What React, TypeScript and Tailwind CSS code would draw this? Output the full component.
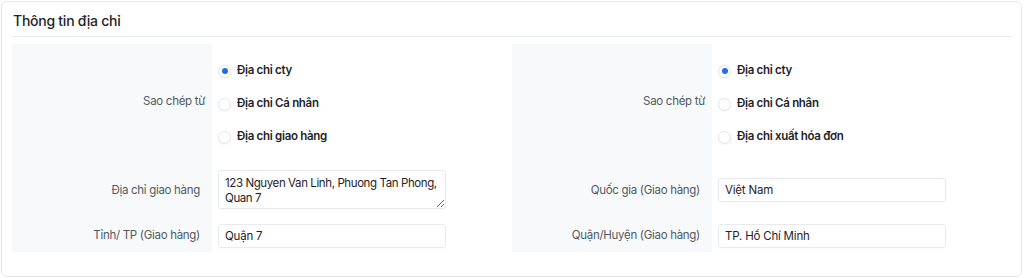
import React from 'react'

type Side = {
  options: string[]
  checked: number
  rowTwo: { label: string; value: string; multiline?: boolean }
  rowThree: { label: string; value: string }
}

const SIDES: Side[] = [
  {
    options: ['Địa chỉ cty', 'Địa chỉ Cá nhân', 'Địa chỉ giao hàng'],
    checked: 0,
    rowTwo: { label: 'Địa chỉ giao hàng', value: '123 Nguyen Van Linh, Phuong Tan Phong, Quan 7', multiline: true },
    rowThree: { label: 'Tỉnh/ TP (Giao hàng)', value: 'Quận 7' },
  },
  {
    options: ['Địa chỉ cty', 'Địa chỉ Cá nhân', 'Địa chỉ xuất hóa đơn'],
    checked: 0,
    rowTwo: { label: 'Quốc gia (Giao hàng)', value: 'Việt Nam' },
    rowThree: { label: 'Quận/Huyện (Giao hàng)', value: 'TP. Hồ Chí Minh' },
  },
]

function Radio({ label, checked }: { label: string; checked: boolean }) {
  return (
    <label className="h-[33px] flex items-center gap-[6px] cursor-pointer">
      <span className="w-[13px] h-[13px] rounded-full border border-[#e3e5e8] bg-white flex items-center justify-center shadow-[0_1px_1px_rgba(0,0,0,0.04)]">
        {checked && <span className="w-[6px] h-[6px] rounded-full bg-[#1f6fe5]" />}
      </span>
      <span className="text-[11.5px] tracking-[-0.3px] font-semibold text-[#1f2328]">{label}</span>
    </label>
  )
}

function Column({ side }: { side: Side }) {
  const inputCls = 'w-[228px] border border-[#e8eaed] rounded-[3px] bg-white text-[11.5px] text-[#1f2328] outline-none shadow-[0_1px_1px_rgba(0,0,0,0.02)]'
  const labelCls = 'w-[200px] bg-[#f8f9fa] flex items-center justify-end text-[11.5px] tracking-[-0.3px] text-[#525a63]'
  return (
    <div className="flex flex-col">
      {/* Sao chép từ */}
      <div className="flex h-[116px]">
        <div className={`${labelCls} pr-[7px]`}>Sao chép từ</div>
        <div className="pl-[6px] pt-[10.5px] flex flex-col">
          {side.options.map((o, i) => <Radio key={o} label={o} checked={i === side.checked} />)}
        </div>
      </div>

      <div className="flex h-[59px]">
        <div className={`${labelCls} pr-3 pt-[3px]`}>{side.rowTwo.label}</div>
        <div className="pl-[6px] flex items-center">
          {side.rowTwo.multiline ? (
            <textarea
              defaultValue={side.rowTwo.value}
              className={`${inputCls} tracking-[-0.4px] h-[39px] pl-[6px] pr-[2px] pt-[5px] pb-[2px] leading-[14.5px] resize-y overflow-hidden block`}
            />
          ) : (
            <input defaultValue={side.rowTwo.value} className={`${inputCls} tracking-[-0.2px] h-[24px] px-[6px]`} />
          )}
        </div>
      </div>

      <div className="flex h-[33px]">
        <div className={`${labelCls} pr-3`}>{side.rowThree.label}</div>
        <div className="pl-[6px] pt-[3px]">
          <input defaultValue={side.rowThree.value} className={`${inputCls} tracking-[-0.2px] h-[24px] px-[6px]`} />
        </div>
      </div>
    </div>
  )
}

export default function App() {
  return (
    <div className="w-[1024px] h-[278px] bg-white pt-px pl-px" style={{ fontFamily: 'Inter, "Noto Sans", sans-serif' }}>
      <div className="w-[1021px] h-[276px] border border-[#e5e7eb] rounded-md px-[10px]">
        <div className="w-[1000px]">
          <h2 className="pt-[9px] pb-[5px] text-[14px] tracking-[-0.25px] leading-[20px] font-medium text-[#1f2328] pl-px">
            Thông tin địa chỉ
          </h2>
          <div className="h-px bg-[#ebedf0]" />
          <div className="grid grid-cols-2 pt-[7px]">
            {SIDES.map((s, i) => <Column key={i} side={s} />)}
          </div>
        </div>
      </div>
    </div>
  )
}
